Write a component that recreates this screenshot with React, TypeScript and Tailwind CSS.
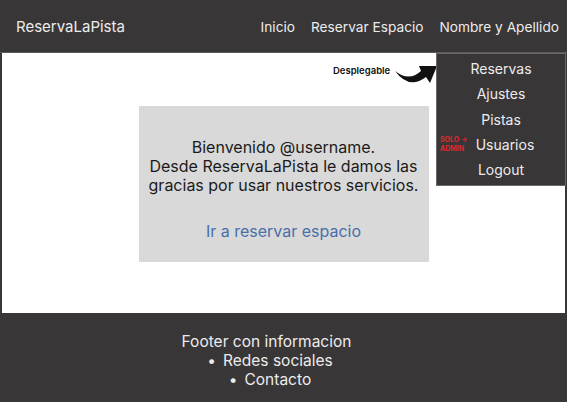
const navLinks = ['Inicio', 'Reservar Espacio', 'Nombre y Apellido']
const menuItems = ['Reservas', 'Ajustes', 'Pistas', 'Usuarios', 'Logout']

function CurvedArrow() {
  return (
    <svg width="46" height="32" viewBox="0 0 46 32" className="absolute left-[391px] top-[6px]">
      <path
        d="M2 12 Q 16 23 28 12 L 26 7 L 44 7 L 37 24 L 33 18 Q 16 31 2 12 Z"
        fill="#111"
      />
    </svg>
  )
}

export default function App() {
  return (
    <div className="relative w-[567px] h-[402px] bg-[#393637] font-['Inter',sans-serif] overflow-hidden">
      {/* Header */}
      <header className="h-[53px] flex items-center justify-between pl-4 pr-2 pt-[2px] border-b border-[#5c5a5b]">
        <div className="text-[15px] text-[#ececec]">ReservaLaPista</div>
        <nav className="flex items-center gap-[16px] text-[13.7px] text-[#ececec]">
          {navLinks.map((l) => (
            <span key={l}>{l}</span>
          ))}
        </nav>
      </header>

      {/* Body */}
      <main className="relative mx-[2px] h-[260px] bg-white pt-[53px]">
        <span className="absolute left-[331px] top-[11px] text-[9.5px] font-semibold text-[#111]">Desplegable</span>
        <CurvedArrow />

        <div className="mx-auto w-[290px] h-[156px] bg-[#d9d9d9] flex flex-col items-center pt-[32px] text-center">
          <p className="text-[16px] leading-[19px] text-[#1b1b1b]">
            Bienvenido @username.
            <br />
            Desde ReservaLaPista le damos las
            <br />
            gracias por usar nuestros servicios.
          </p>
          <a className="mt-[27px] text-[16px] leading-[19px] text-[#4a6fa8]">Ir a reservar espacio</a>
        </div>
      </main>

      {/* Dropdown */}
      <div className="absolute right-[1px] top-[53px] w-[130px] bg-[#393637] border border-[#6a6869] flex flex-col items-center gap-[5.25px] pt-[5px] pb-[5px] text-[14px] leading-[20px] text-[#ececec]">
        {menuItems.map((item) => (
          <div key={item} className={`relative w-full text-center ${item === 'Usuarios' ? 'pl-[8px]' : ''}`}>
            {item === 'Usuarios' && (
              <div className="absolute left-[3px] top-[0px] text-[7px] leading-[9px] font-bold text-[#e0262b] text-left">
                SOLO →
                <br />
                ADMIN
              </div>
            )}
            {item}
          </div>
        ))}
      </div>

      {/* Footer */}
      <footer className="h-[88px] pt-[19px] pr-[34px] flex flex-col items-center text-[15.5px] leading-[19px] text-[#ececec]">
        <div>Footer con informacion</div>
        <div className="pl-[7px]">
          <span className="mr-[7px]">•</span>Redes sociales
        </div>
        <div className="pl-[7px]">
          <span className="mr-[7px]">•</span>Contacto
        </div>
      </footer>
    </div>
  )
}
